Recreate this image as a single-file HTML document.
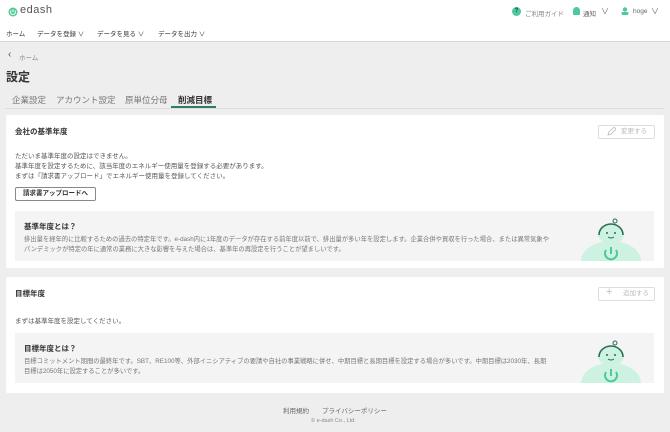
<!DOCTYPE html>
<html><head><meta charset="utf-8"><style>
*{margin:0;padding:0;box-sizing:border-box}
body{width:670px;height:432px;background:#eee;font-family:"Liberation Sans","Noto Sans CJK JP",sans-serif;color:#333;position:relative;overflow:hidden}
.a{position:absolute;white-space:nowrap}
.hdr{position:absolute;left:0;top:0;width:670px;height:23px;background:#fff;box-shadow:0 1px 2px rgba(0,0,0,.08)}
.nav{position:absolute;left:0;top:23px;width:670px;height:19px;background:#fff;border-bottom:1px solid #d8d8d8}
.card{position:absolute;left:6px;width:658px;background:#fff;border-radius:2px}
.btn{position:absolute;border:1px solid #ddd;border-radius:2px;color:#bbb;font-size:6.5px}
.info{position:absolute;left:9px;width:639px;height:50px;background:#f4f4f4;overflow:hidden}
.t7{font-size:6.5px;color:#555}
.it{font-size:6.3px;color:#777}
</style></head><body>
<div class="hdr"></div>
<svg class="a" style="left:8px;top:6px" width="10" height="11" viewBox="0 0 10 11"><circle cx="5" cy="6" r="4.5" fill="#57c99a"/><path d="M3.2 4.5a2.4 2.4 0 1 0 3.6 0" stroke="#fff" fill="none" stroke-width="1"/><line x1="5" y1="3.5" x2="5" y2="6" stroke="#fff" stroke-width="1"/></svg>
<div class="a" style="left:20px;top:4px;font-size:11px;color:#555;letter-spacing:.5px">edash</div>
<div class="a" style="left:512px;top:7px;width:9px;height:9px;border-radius:50%;background:#4dc99a;color:#245;font-size:6px;text-align:center;line-height:9px;font-weight:bold">?</div>
<div class="a t7" style="left:525px;top:8px;color:#888">ご利用ガイド</div>
<div class="a" style="left:573px;top:7px;width:7px;height:8px;border-radius:4px 4px 1px 1px;background:#4dc99a"></div>
<div class="a t7" style="left:583px;top:8px;color:#666">通知</div>
<div class="a" style="left:601px;top:6px;font-size:8px;color:#666">∨</div>
<svg class="a" style="left:621px;top:7px" width="8" height="8"><circle cx="4" cy="2.5" r="2.2" fill="#4dc99a"/><rect x="0.5" y="5" width="7" height="3" rx="1.5" fill="#4dc99a"/></svg>
<div class="a t7" style="left:633px;top:8px;color:#666">hoge</div>
<div class="a" style="left:651px;top:6px;font-size:8px;color:#666">∨</div>
<div class="nav"></div>
<div class="a t7" style="left:6px;top:28px;color:#333">ホーム</div>
<div class="a t7" style="left:37px;top:28px;color:#333">データを登録 ∨</div>
<div class="a t7" style="left:97px;top:28px;color:#333">データを見る ∨</div>
<div class="a t7" style="left:158px;top:28px;color:#333">データを出力 ∨</div>
<div class="a" style="left:8px;top:49px;font-size:10px;color:#555">‹</div>
<div class="a" style="left:19px;top:52px;font-size:6.5px;color:#888">ホーム</div>
<div class="a" style="left:6px;top:68px;font-size:12px;font-weight:bold;color:#333">設定</div>
<div class="a" style="left:5px;top:108px;width:659px;height:1px;background:#ddd"></div>
<div class="a" style="left:12px;top:94px;font-size:8.5px;color:#777">企業設定</div>
<div class="a" style="left:56px;top:94px;font-size:8.5px;color:#777">アカウント設定</div>
<div class="a" style="left:125px;top:94px;font-size:8.5px;color:#777">原単位分母</div>
<div class="a" style="left:178px;top:94px;font-size:8.5px;color:#333;font-weight:bold">削減目標</div>
<div class="a" style="left:171px;top:106px;width:45px;height:2px;background:#2e7d5b"></div>

<div class="card" style="top:115px;height:153px">
<div class="a" style="left:9px;top:11px;font-size:7.5px;font-weight:bold">会社の基準年度</div>
<div class="btn" style="left:592px;top:10px;width:57px;height:14px;line-height:12px;padding-left:22px">変更する</div>
<svg class="a" style="left:600px;top:12px" width="10" height="10"><path d="M2 8l1-3 5-5 2 2-5 5z" fill="none" stroke="#bbb" stroke-width=".8"/></svg>
<div class="a t7" style="left:9px;top:37px;line-height:10px">ただいま基準年度の設定はできません。<br>基準年度を設定するために、該当年度のエネルギー使用量を登録する必要があります。<br>まずは「請求書アップロード」でエネルギー使用量を登録してください。</div>
<div class="a" style="left:9px;top:72px;width:81px;height:14px;border:1px solid #888;border-radius:2px;font-size:6.5px;font-weight:bold;text-align:center;line-height:12px">請求書アップロードへ</div>
<div class="info" style="top:96px">
<div class="a" style="left:9px;top:10px;font-size:7.5px;font-weight:bold">基準年度とは？</div>
<div class="a it" style="left:9px;top:24px;line-height:10px">排出量を経年的に比較するための過去の特定年です。e-dash内に1年度のデータが存在する前年度以前で、排出量が多い年を設定します。企業合併や買収を行った場合、または異常気象や<br>パンデミックが特定の年に通常の業務に大きな影響を与えた場合は、基準年の再設定を行うことが望ましいです。</div>
<svg class="a" style="left:560px;top:6px" width="72" height="46"><ellipse cx="36" cy="44" rx="30" ry="20" fill="#cdf2e2"/><ellipse cx="36" cy="17" rx="13" ry="10" fill="#cdf2e2"/><path d="M24 18a12 11 0 0 1 24 0" stroke="#2e6b55" fill="none" stroke-width="1.6"/><circle cx="40" cy="4" r="2" fill="none" stroke="#2e6b55"/><circle cx="32" cy="16" r="1" fill="#2e6b55"/><circle cx="40" cy="16" r="1" fill="#2e6b55"/><path d="M33 20q3 2 6 0" stroke="#2e6b55" fill="none"/><path d="M31 33a6 6 0 1 0 10 0" stroke="#4dc99a" fill="none" stroke-width="2"/><line x1="36" y1="30" x2="36" y2="37" stroke="#4dc99a" stroke-width="2"/></svg>
</div>
</div>

<div class="card" style="top:277px;height:116px">
<div class="a" style="left:9px;top:11px;font-size:7.5px;font-weight:bold">目標年度</div>
<div class="btn" style="left:592px;top:10px;width:57px;height:14px;line-height:12px;padding-left:24px">追加する</div>
<div class="a" style="left:600px;top:9px;color:#bbb;font-size:11px">+</div>
<div class="a t7" style="left:9px;top:38px">まずは基準年度を設定してください。</div>
<div class="info" style="top:56px">
<div class="a" style="left:9px;top:10px;font-size:7.5px;font-weight:bold">目標年度とは？</div>
<div class="a it" style="left:9px;top:24px;line-height:10px">目標コミットメント期間の最終年です。SBT、RE100等、外部イニシアティブの要請や自社の事業戦略に併せ、中期目標と長期目標を設定する場合が多いです。中期目標は2030年、長期<br>目標は2050年に設定することが多いです。</div>
<svg class="a" style="left:560px;top:6px" width="72" height="46"><ellipse cx="36" cy="44" rx="30" ry="20" fill="#cdf2e2"/><ellipse cx="36" cy="17" rx="13" ry="10" fill="#cdf2e2"/><path d="M24 18a12 11 0 0 1 24 0" stroke="#2e6b55" fill="none" stroke-width="1.6"/><circle cx="40" cy="4" r="2" fill="none" stroke="#2e6b55"/><circle cx="32" cy="16" r="1" fill="#2e6b55"/><circle cx="40" cy="16" r="1" fill="#2e6b55"/><path d="M33 20q3 2 6 0" stroke="#2e6b55" fill="none"/><path d="M31 33a6 6 0 1 0 10 0" stroke="#4dc99a" fill="none" stroke-width="2"/><line x1="36" y1="30" x2="36" y2="37" stroke="#4dc99a" stroke-width="2"/></svg>
</div>
</div>

<div class="a t7" style="left:283px;top:405px;color:#666">利用規約</div>
<div class="a t7" style="left:322px;top:405px;color:#666">プライバシーポリシー</div>
<div class="a" style="left:311px;top:418px;font-size:5.5px;color:#888">© e-dash Co., Ltd.</div>
</body></html>
